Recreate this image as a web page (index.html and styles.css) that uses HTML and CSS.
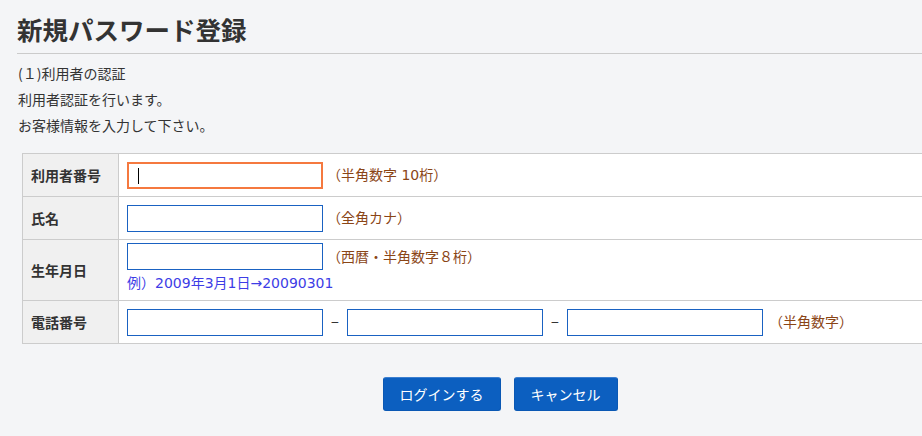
FILE: index.html
```html
<!DOCTYPE html>
<html lang="ja">
<head>
<meta charset="utf-8">
<title>新規パスワード登録</title>
<link rel="stylesheet" href="styles.css">
</head>
<body>
<div class="viewport">
  <div class="page">
    <h1 class="title">新規パスワード登録</h1>
    <div class="intro">
      <p class="line">(１)利用者の認証</p>
      <p class="line">利用者認証を行います。</p>
      <p class="line">お客様情報を入力して下さい。</p>
    </div>
    <table class="form">
      <tr class="row">
        <th class="label">利用者番号</th>
        <td class="value">
          <span class="field-wrap"><input class="field field-active" type="text"><span class="caret"></span></span><span class="hint">（半角数字 10桁）</span>
        </td>
      </tr>
      <tr class="row">
        <th class="label">氏名</th>
        <td class="value">
          <input class="field" type="text"><span class="hint">（全角カナ）</span>
        </td>
      </tr>
      <tr class="row">
        <th class="label">生年月日</th>
        <td class="value value-tall">
          <div><input class="field" type="text"><span class="hint">（西暦・半角数字８桁）</span></div>
          <div class="example">例）2009年3月1日→20090301</div>
        </td>
      </tr>
      <tr class="row">
        <th class="label">電話番号</th>
        <td class="value">
          <input class="field" type="text"><span class="dash">−</span><input class="field" type="text"><span class="dash">−</span><input class="field" type="text"><span class="hint hint-phone">（半角数字）</span>
        </td>
      </tr>
    </table>
    <div class="actions">
      <button class="btn" type="button">ログインする</button>
      <button class="btn" type="button">キャンセル</button>
    </div>
  </div>
</div>
</body>
</html>
```
FILE: styles.css
```css
html, body {
  margin: 0;
  padding: 0;
  background: #f4f5f7;
}
body {
  font-family: "Noto Sans CJK JP", "Noto Sans", sans-serif;
  color: #333;
}
.viewport {
  width: 922px;
  height: 436px;
  overflow: hidden;
}
.page {
  width: 964px;
  margin-left: 17px;
  padding-top: 14px;
}
.title {
  margin: 0;
  font-size: 25.5px;
  line-height: 30px;
  font-weight: 700;
  color: #333;
  padding-bottom: 9px;
  border-bottom: 1px solid #cbcbcb;
}
.intro {
  margin-top: 6px;
  padding-left: 1px;
}
.line {
  margin: 0;
  font-size: 14px;
  line-height: 26px;
  color: #333;
}
.form {
  margin-top: 15px;
  margin-left: 5px;
  width: 955px;
  border-collapse: collapse;
  border: 1px solid #cccccc;
  background: #fff;
}
.row th, .row td {
  border: 1px solid #cccccc;
}
.label {
  width: 79px;
  background: #f0f0f0;
  text-align: left;
  font-weight: 700;
  font-size: 14px;
  color: #333;
  padding: 0 8px;
  height: 42px;
  vertical-align: middle;
}
.value {
  padding: 0 8px;
  height: 42px;
  vertical-align: middle;
  font-size: 14px;
  line-height: 20px;
}
.value > * {
  vertical-align: middle;
}
.value-tall {
  padding: 3px 8px 7px;
  height: auto;
}
.value-tall div {
  display: flex;
  align-items: center;
}
.field-wrap {
  position: relative;
  display: inline-block;
}
.field {
  box-sizing: border-box;
  width: 196px;
  height: 27px;
  margin: 0;
  border: 1px solid #1a62c2;
  background: #fff;
  outline: none;
  padding: 0 8px;
  vertical-align: middle;
  font: inherit;
}
.field-active {
  border: 2px solid #f5793f;
}
.caret {
  position: absolute;
  left: 11px;
  top: 6px;
  width: 1px;
  height: 16px;
  background: #000;
}
.hint {
  margin-left: 4px;
  color: #8a4516;
  font-family: "DejaVu Sans", "Noto Sans CJK JP", sans-serif;
  font-size: 14px;
}
.hint-phone {
  margin-left: 6px;
}
.dash {
  display: inline-block;
  width: 24px;
  text-align: center;
  color: #333;
  font-size: 14px;
}
.example {
  margin-top: 3px;
  color: #3d3de6;
  font-family: "DejaVu Sans", "Noto Sans CJK JP", sans-serif;
  font-size: 14px;
  line-height: 20px;
  display: block;
}
.actions {
  display: flex;
  justify-content: center;
  gap: 13px;
  margin-top: 33px;
  padding-left: 2px;
}
.btn {
  height: 34px;
  padding: 0 16px;
  background: #0c5fc0;
  border: 1px solid #0a58b4;
  border-top-color: #3c7fd0;
  border-radius: 3px;
  color: #fff;
  font-family: inherit;
  font-size: 14px;
  cursor: pointer;
}
```
